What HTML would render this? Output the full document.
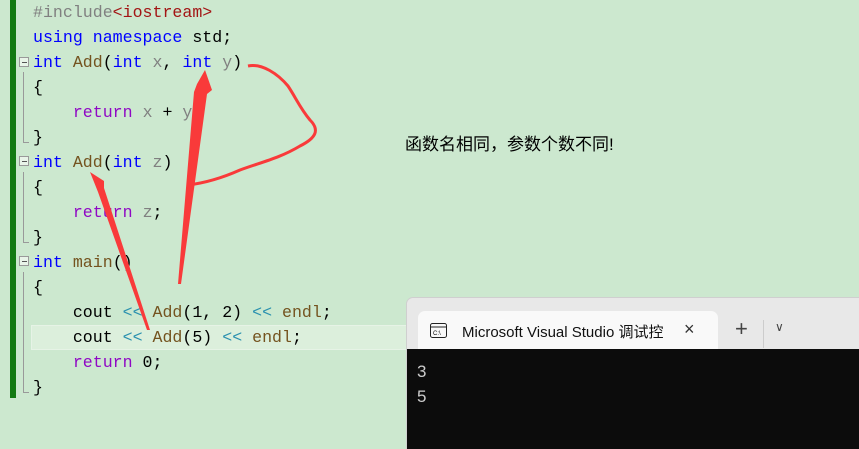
<!DOCTYPE html>
<html><head><meta charset="utf-8"><style>
body{margin:0;width:859px;height:435px;background:#cce8cf;position:relative;overflow:hidden;font-family:"Liberation Mono",monospace;}
.bar{position:absolute;left:10px;top:0;width:6px;height:398px;background:#137a13;}
.l{position:absolute;left:33px;font-size:16.6px;line-height:25px;height:25px;white-space:pre;color:#000;}
.k{color:#0000ff}.f{color:#74531f}.p{color:#8f08c4}.g{color:#808080}.s{color:#a31515}.c{color:#808080}.o{color:#2b91af}.n{color:#000}
.fold{position:absolute;left:19px;width:8px;height:8px;border:1px solid #999;background:#e8f4e8;}
.fold:after{content:"";position:absolute;left:2px;top:4px;width:5px;height:1px;background:#555;}
.vl{position:absolute;left:23px;width:1px;background:#999;}
.hl{position:absolute;left:31px;top:325px;width:380px;height:23px;background:#dcefdc;border:1px solid #e6f3e6;}
.term{position:absolute;left:406px;top:297px;width:460px;height:150px;background:#e8e8e8;border-radius:7px 0 0 0;border:1px solid #cfcfcf;}
.tab{position:absolute;left:11px;top:13px;width:300px;height:39px;background:#f9f9f9;border-radius:7px 7px 0 0;font-family:"Liberation Sans","Noto Sans CJK SC",sans-serif;font-size:15px;overflow:hidden;}
.con{position:absolute;left:0;top:51px;width:460px;height:100px;background:#0c0c0c;color:#ccc;font-family:"Liberation Sans",sans-serif;font-size:17px;line-height:25px;padding:10px 10px;box-sizing:border-box;}
.note{position:absolute;left:405px;top:130px;font-family:"Liberation Sans","Noto Sans CJK SC",sans-serif;font-size:17px;color:#000;}
</style></head><body>
<div class="bar"></div>
<div class="hl"></div>
<div class="vl" style="top:72px;height:70px"></div>
<div class="vl" style="top:172px;height:70px"></div>
<div class="vl" style="top:272px;height:120px"></div>
<div class="vl" style="left:23px;top:142px;width:6px;height:1px"></div>
<div class="vl" style="left:23px;top:242px;width:6px;height:1px"></div>
<div class="vl" style="left:23px;top:392px;width:6px;height:1px"></div>
<div class="fold" style="top:57px"></div>
<div class="fold" style="top:156px"></div>
<div class="fold" style="top:256px"></div>
<div class="l" style="top:0"><span class="c">#include</span><span class="s">&lt;iostream&gt;</span></div>
<div class="l" style="top:25px"><span class="k">using namespace</span> std;</div>
<div class="l" style="top:50px"><span class="k">int</span> <span class="f">Add</span>(<span class="k">int</span> <span class="g">x</span>, <span class="k">int</span> <span class="g">y</span>)</div>
<div class="l" style="top:75px">{</div>
<div class="l" style="top:100px">    <span class="p">return</span> <span class="g">x</span> + <span class="g">y</span>;</div>
<div class="l" style="top:125px">}</div>
<div class="l" style="top:150px"><span class="k">int</span> <span class="f">Add</span>(<span class="k">int</span> <span class="g">z</span>)</div>
<div class="l" style="top:175px">{</div>
<div class="l" style="top:200px">    <span class="p">return</span> <span class="g">z</span>;</div>
<div class="l" style="top:225px">}</div>
<div class="l" style="top:250px"><span class="k">int</span> <span class="f">main</span>()</div>
<div class="l" style="top:275px">{</div>
<div class="l" style="top:300px">    cout <span class="o">&lt;&lt;</span> <span class="f">Add</span>(1, 2) <span class="o">&lt;&lt;</span> <span class="f">endl</span>;</div>
<div class="l" style="top:325px">    cout <span class="o">&lt;&lt;</span> <span class="f">Add</span>(5) <span class="o">&lt;&lt;</span> <span class="f">endl</span>;</div>
<div class="l" style="top:350px">    <span class="p">return</span> 0;</div>
<div class="l" style="top:375px">}</div>
<svg style="position:absolute;left:0;top:0" width="859" height="435">
<path d="M248 66 C262 63 278 74 288 86 C296 98 300 108 310 120 C320 130 316 138 300 146 C280 158 262 162 240 170 C222 178 205 183 188 185" fill="none" stroke="#f93a3a" stroke-width="3"/>
<polygon points="178,284 194,92 197,84 205,70 212,90 207,94 181,284" fill="#f93a3a"/>
<polygon points="147,330 98,192 90,172 104,181 104,188 150,330" fill="#f93a3a"/>
</svg>
<div class="note">函数名相同，参数个数不同!</div>
<div class="term">
<div class="tab">
<svg style="position:absolute;left:12px;top:12px" width="18" height="16"><rect x="0.5" y="0.5" width="16" height="14" rx="2" fill="none" stroke="#222"/><line x1="1" y1="4" x2="16" y2="4" stroke="#222"/><text x="3" y="12" font-size="6" font-family="Liberation Sans">C:\</text></svg>
<span style="position:absolute;left:44px;top:10px;width:205px;overflow:hidden;white-space:nowrap;color:#111">Microsoft Visual Studio 调试控</span>
<span style="position:absolute;left:266px;top:8px;font-size:18px;color:#333">×</span>
</div>
<span style="position:absolute;left:328px;top:18px;font-family:'Liberation Sans';font-size:22px;color:#444">+</span>
<div style="position:absolute;left:356px;top:22px;width:1px;height:28px;background:#ccc"></div>
<span style="position:absolute;left:368px;top:22px;font-family:'Liberation Sans';font-size:12px;color:#444">∨</span>
<div class="con">3<br>5</div>
</div>
</body></html>
